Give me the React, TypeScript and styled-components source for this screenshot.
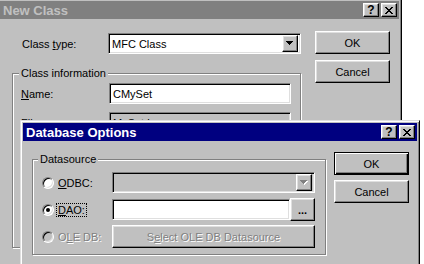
import React from 'react'
import styled, { createGlobalStyle, css } from 'styled-components'

const GlobalStyle = createGlobalStyle`
  body {
    margin: 0;
    background: #fff;
  }
`

const raised = css`
  background: #c0c0c0;
  border: 1px solid;
  border-color: #fff #000 #000 #fff;
  box-shadow: inset -1px -1px #808080, inset 1px 1px #dfdfdf;
`

const sunken = css`
  border: 1px solid;
  border-color: #808080 #fff #fff #808080;
  box-shadow: inset 1px 1px #000, inset -1px -1px #dfdfdf;
`

const disabledText = css`
  color: #808080;
  text-shadow: 1px 1px #fff;
`

const Desktop = styled.div`
  position: relative;
  width: 424px;
  height: 264px;
  overflow: hidden;
  background: #fff;
  font-family: 'Liberation Sans', Arial, sans-serif;
  font-size: 11px;
  color: #000;
`

// windows sit on a free desktop, so they are placed by coordinates
const Window = styled.div<{ $left: number; $top: number; $width: number; $height: number }>`
  position: absolute;
  left: ${(p) => p.$left}px;
  top: ${(p) => p.$top}px;
  width: ${(p) => p.$width}px;
  height: ${(p) => p.$height}px;
  box-sizing: border-box;
  background: #c0c0c0;
  border: 1px solid;
  border-color: #dfdfdf #000 #000 #dfdfdf;
  box-shadow: inset 1px 1px #fff, inset -1px -1px #808080;
  padding: 2px;
  display: flex;
  flex-direction: column;
`

const TitleBar = styled.div<{ $active?: boolean }>`
  height: 18px;
  flex: none;
  display: flex;
  align-items: center;
  padding: 0 2px 0 2px;
  background: ${(p) => (p.$active ? '#000080' : '#808080')};
  color: ${(p) => (p.$active ? '#fff' : '#c0c0c0')};
  font-weight: bold;
  font-size: 13px;
`

const TitleText = styled.span`
  flex: 1;
  padding-left: 1px;
  white-space: nowrap;
`

const TitleButton = styled.div`
  ${raised};
  box-sizing: border-box;
  width: 16px;
  height: 14px;
  margin-left: 2px;
  display: flex;
  align-items: center;
  justify-content: center;
  color: #000;
  font-weight: bold;
  font-size: 12px;
  line-height: 12px;
  &:first-of-type {
    margin-left: 0;
  }
`

const OuterBody = styled.div`
  display: flex;
  padding: 12px 0 0 12px;
`

const InnerBody = styled.div`
  display: flex;
  padding: 11px 0 0 9px;
`

const LeftColumn = styled.div`
  display: flex;
  flex-direction: column;
`

const ButtonColumn = styled.div<{ $gap: number; $offset: number }>`
  display: flex;
  flex-direction: column;
  gap: ${(p) => p.$gap}px;
  margin-left: ${(p) => p.$offset}px;
`

const Row = styled.div<{ $pad?: number; $top?: number }>`
  display: flex;
  align-items: center;
  height: 21px;
  padding-left: ${(p) => p.$pad ?? 0}px;
  margin-top: ${(p) => p.$top ?? 0}px;
`

const Label = styled.span<{ $width: number; $disabled?: boolean }>`
  width: ${(p) => p.$width}px;
  flex: none;
  white-space: nowrap;
  ${(p) => p.$disabled && disabledText};
`

const Field = styled.div<{ $width: number; $gray?: boolean }>`
  ${sunken};
  box-sizing: border-box;
  width: ${(p) => p.$width}px;
  height: 21px;
  background: ${(p) => (p.$gray ? '#c0c0c0' : '#fff')};
  display: flex;
  align-items: center;
  padding: 0 2px 0 3px;
  white-space: nowrap;
  overflow: hidden;
`

const FieldText = styled.span`
  flex: 1;
`

const ArrowButton = styled.div`
  ${raised};
  box-sizing: border-box;
  width: 16px;
  height: 17px;
  display: flex;
  align-items: center;
  justify-content: center;
`

const PushButton = styled.div<{ $default?: boolean; $width?: number; $disabled?: boolean; $bold?: boolean }>`
  ${raised};
  box-sizing: border-box;
  width: ${(p) => p.$width ?? 75}px;
  height: 23px;
  display: flex;
  align-items: center;
  justify-content: center;
  white-space: nowrap;
  font-weight: ${(p) => (p.$bold ? 'bold' : 'normal')};
  ${(p) =>
    p.$default &&
    css`
      border-color: #000;
      box-shadow: inset 1px 1px #fff, inset -1px -1px #000, inset -2px -2px #808080;
    `}
  ${(p) => p.$disabled && disabledText};
`

const GroupBox = styled.div<{ $width: number; $height: number; $top: number; $pad: string }>`
  position: relative;
  box-sizing: border-box;
  width: ${(p) => p.$width}px;
  height: ${(p) => p.$height}px;
  margin-top: ${(p) => p.$top}px;
  border: 1px solid #808080;
  box-shadow: inset 1px 1px #fff, 1px 1px #fff;
  padding: ${(p) => p.$pad};
  display: flex;
  flex-direction: column;
`

const GroupLabel = styled.span<{ $left: number }>`
  position: absolute;
  top: -7px;
  left: ${(p) => p.$left}px;
  padding: 0 2px;
  background: #c0c0c0;
  line-height: 13px;
`

const Rows = styled.div<{ $gap: number }>`
  display: flex;
  flex-direction: column;
  gap: ${(p) => p.$gap}px;
`

const Radio = styled.span<{ $checked?: boolean; $disabled?: boolean }>`
  box-sizing: border-box;
  width: 12px;
  height: 12px;
  flex: none;
  border-radius: 50%;
  border: 1px solid;
  border-color: #808080 #fff #fff #808080;
  box-shadow: inset 1px 1px #000, inset -1px -1px #dfdfdf;
  background: ${(p) => (p.$disabled ? '#c0c0c0' : '#fff')};
  display: flex;
  align-items: center;
  justify-content: center;
  margin-right: 4px;
  &::after {
    content: '';
    display: ${(p) => (p.$checked ? 'block' : 'none')};
    width: 4px;
    height: 4px;
    border-radius: 50%;
    background: #000;
  }
`

const RadioCell = styled.div`
  display: flex;
  align-items: center;
  width: 70px;
  flex: none;
`

const Focus = styled.span`
  outline: 1px dotted #000;
  outline-offset: 0;
  padding: 0 1px;
  margin-left: -1px;
`

const Key = styled.u`
  text-decoration: underline;
`

const CloseGlyph = () => {
  const rows = ['11000011', '01100110', '00111100', '00011000', '00111100', '01100110', '11000011']
  return (
    <svg width="8" height="7" shapeRendering="crispEdges">
      {rows.map((r, y) =>
        r.split('').map((c, x) => (c === '1' ? <rect key={`${x}-${y}`} x={x} y={y} width="1" height="1" fill="#000" /> : null))
      )}
    </svg>
  )
}

const DownArrow = ({ disabled }: { disabled?: boolean }) => (
  <svg width="8" height="5" shapeRendering="crispEdges">
    {disabled && <polygon points="1,1 8,1 4.5,5" fill="#fff" />}
    <polygon points="0,0 7,0 3.5,4" fill={disabled ? '#808080' : '#000'} />
  </svg>
)

const TitleButtons = () => (
  <>
    <TitleButton>?</TitleButton>
    <TitleButton>
      <CloseGlyph />
    </TitleButton>
  </>
)

export default function App() {
  return (
    <Desktop>
      <GlobalStyle />

      {/* janela de fundo, inativa */}
      <Window $left={-3} $top={-2} $width={405} $height={300}>
        <TitleBar>
          <TitleText>New Class</TitleText>
          <TitleButtons />
        </TitleBar>
        <OuterBody>
          <LeftColumn>
            <Row $pad={10} $top={2}>
              <Label $width={86}>
                Class <Key>t</Key>ype:
              </Label>
              <Field $width={193}>
                <FieldText>MFC Class</FieldText>
                <ArrowButton>
                  <DownArrow />
                </ArrowButton>
              </Field>
            </Row>

            <GroupBox $width={289} $height={175} $top={19} $pad="9px 8px 0 8px">
              <GroupLabel $left={6}>Class information</GroupLabel>
              <Rows $gap={8}>
                <Row>
                  <Label $width={88}>
                    <Key>N</Key>ame:
                  </Label>
                  <Field $width={182}>CMySet</Field>
                </Row>
                {/* linha quase toda coberta pelo diálogo da frente */}
                <Row>
                  <Label $width={88}>
                    F<Key>i</Key>le name:
                  </Label>
                  <Field $width={182} $gray>
                    MySet.h
                  </Field>
                </Row>
              </Rows>
            </GroupBox>
          </LeftColumn>

          <ButtonColumn $gap={6} $offset={14}>
            <PushButton>OK</PushButton>
            <PushButton>Cancel</PushButton>
          </ButtonColumn>
        </OuterBody>
      </Window>

      {/* diálogo ativo por cima */}
      <Window $left={20} $top={120} $width={400} $height={170}>
        <TitleBar $active>
          <TitleText>Database Options</TitleText>
          <TitleButtons />
        </TitleBar>
        <InnerBody>
          <GroupBox $width={294} $height={96} $top={7} $pad="12px 10px 7px 9px">
            <GroupLabel $left={5}>Datasource</GroupLabel>
            <Rows $gap={6}>
              <Row>
                <RadioCell>
                  <Radio />
                  <span>
                    <Key>O</Key>DBC:
                  </span>
                </RadioCell>
                <Field $width={203} $gray>
                  <FieldText />
                  <ArrowButton>
                    <DownArrow disabled />
                  </ArrowButton>
                </Field>
              </Row>
              <Row>
                <RadioCell>
                  <Radio $checked />
                  <Focus>
                    <Key>D</Key>AO:
                  </Focus>
                </RadioCell>
                <Field $width={178} />
                <PushButton $width={25} $bold>
                  ...
                </PushButton>
              </Row>
              <Row>
                <RadioCell>
                  <Radio $disabled />
                  <Label $width={50} $disabled>
                    O<Key>L</Key>E DB:
                  </Label>
                </RadioCell>
                <PushButton $width={203} $disabled>
                  S<Key>e</Key>lect OLE DB Datasource
                </PushButton>
              </Row>
            </Rows>
          </GroupBox>

          <ButtonColumn $gap={5} $offset={8}>
            <PushButton $default>OK</PushButton>
            <PushButton>Cancel</PushButton>
          </ButtonColumn>
        </InnerBody>
      </Window>
    </Desktop>
  )
}
